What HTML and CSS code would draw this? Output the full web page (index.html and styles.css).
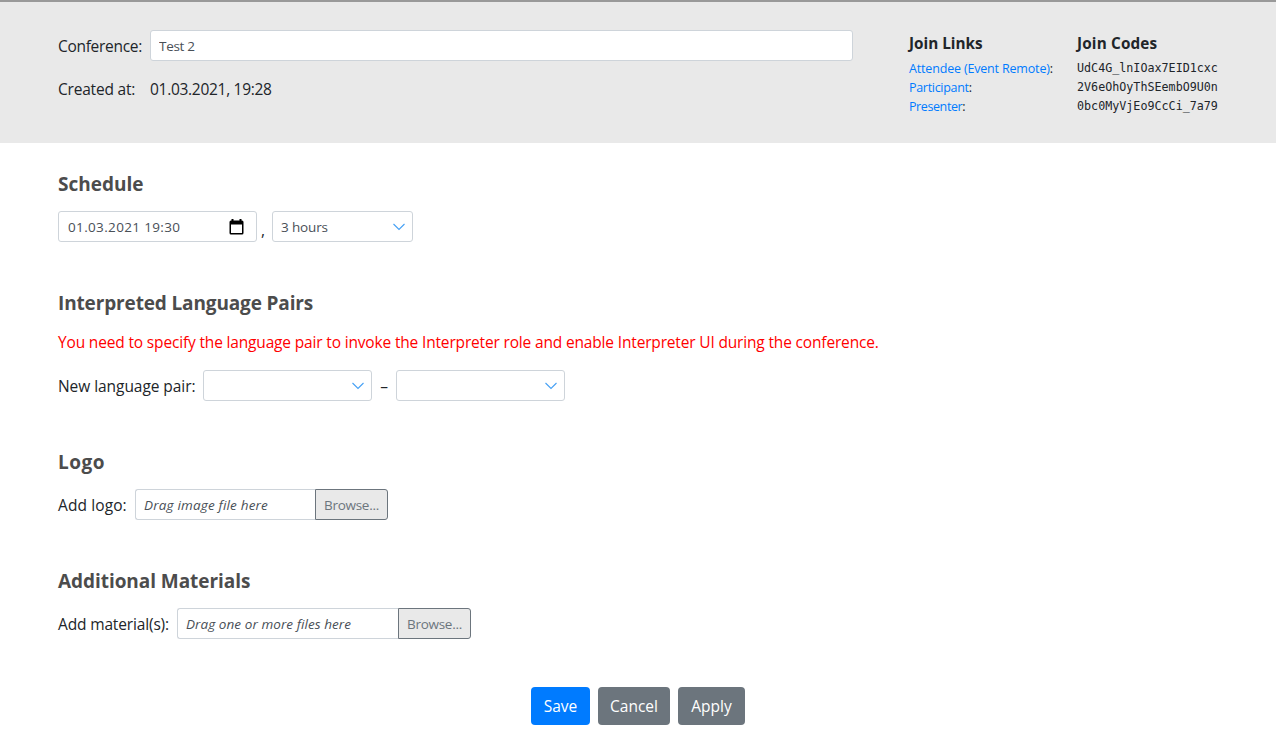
FILE: index.html
```html
<!DOCTYPE html>
<html lang="en">
<head>
<meta charset="utf-8">
<title>Conference</title>
<link rel="stylesheet" href="styles.css">
</head>
<body>
<header class="top">
  <div class="info">
    <label class="label conference" for="name">Conference:</label>
    <input class="control name" id="name" type="text" value="Test 2">
    <span class="label created">Created at:</span>
    <span class="date">01.03.2021, 19:28</span>
  </div>
  <div class="join">
    <strong class="join-title links-title">Join Links</strong>
    <strong class="join-title codes-title">Join Codes</strong>
    <span class="link-row attendee"><a class="link">Attendee (Event Remote)</a>:</span>
    <code class="code">UdC4G_lnIOax7EID1cxc</code>
    <span class="link-row participant"><a class="link">Participant</a>:</span>
    <code class="code">2V6eOhOyThSEembO9U0n</code>
    <span class="link-row presenter"><a class="link">Presenter</a>:</span>
    <code class="code">0bc0MyVjEo9CcCi_7a79</code>
  </div>
</header>
<main class="main">
  <section class="section">
    <h2 class="heading schedule">Schedule</h2>
    <div class="row">
      <div class="control datetime"><span class="datetime-text">01.03.2021 19:30</span>
        <svg class="calendar" width="15" height="16" viewBox="0 0 15 16"><path d="M2.5 0h2v1.5h6V0h2v1.5H13a1.5 1.5 0 0 1 1.5 1.500V14A1.500 1.500 0 0 1 13 15.500H2A1.500 1.500 0 0 1 .5 14V3A1.500 1.500 0 0 1 2 1.500h.5zM2 5.500V14h11V5.500z" fill="#000" fill-rule="evenodd"/></svg>
      </div>
      <span class="comma">,</span>
      <div class="control select hours"><span class="hours-text">3 hours</span><svg class="chevron" width="12" height="8" viewBox="0 0 12 8"><path d="M.5 1 6 6.500 11.500 1" fill="none" stroke="#45a0f5" stroke-width="1.100"/></svg></div>
    </div>
  </section>
  <section class="section">
    <h2 class="heading pairs">Interpreted Language Pairs</h2>
    <p class="warning">You need to specify the language pair to invoke the Interpreter role and enable Interpreter UI during the conference.</p>
    <div class="row">
      <span class="label new-pair">New language pair:</span>
      <div class="control select language"><svg class="chevron" width="12" height="8" viewBox="0 0 12 8"><path d="M.5 1 6 6.500 11.500 1" fill="none" stroke="#45a0f5" stroke-width="1.100"/></svg></div>
      <span class="dash">–</span>
      <div class="control select language"><svg class="chevron" width="12" height="8" viewBox="0 0 12 8"><path d="M.5 1 6 6.500 11.500 1" fill="none" stroke="#45a0f5" stroke-width="1.100"/></svg></div>
    </div>
  </section>
  <section class="section">
    <h2 class="heading logo">Logo</h2>
    <div class="row">
      <span class="label add-logo">Add logo:</span>
      <div class="control drop logo-drop"><span class="drop-text">Drag image file here</span></div>
      <button class="browse" type="button">Browse...</button>
    </div>
  </section>
  <section class="section">
    <h2 class="heading materials">Additional Materials</h2>
    <div class="row">
      <span class="label add-materials">Add material(s):</span>
      <div class="control drop material-drop"><span class="drop-text">Drag one or more files here</span></div>
      <button class="browse" type="button">Browse...</button>
    </div>
  </section>
</main>
<footer class="actions">
  <button class="button save" type="button">Save</button>
  <button class="button cancel" type="button">Cancel</button>
  <button class="button apply" type="button">Apply</button>
</footer>
</body>
</html>
```
FILE: styles.css
```css
* { box-sizing: border-box; }
body {
  margin: 0;
  background: #fff;
  color: #212529;
  font: 400 15.500px/24px "Open Sans", "Noto Sans", sans-serif;
  white-space: nowrap;
}
.top {
  display: flex;
  justify-content: space-between;
  height: 143px;
  padding: 28px 58px 0;
  border-top: 2px solid #999;
  background: #e9e9e9;
}
.info {
  display: grid;
  grid-template-columns: 92px 703px;
  grid-template-rows: 31px 24px;
  row-gap: 16px;
  align-content: start;
  align-items: center;
}
.control {
  display: flex;
  align-items: center;
  height: 31px;
  padding: 1px 8px 0;
  border: 1px solid #ced4da;
  border-radius: 3px;
  background: #fff;
  color: #495057;
  font: 400 13.500px/21px "Open Sans", "Noto Sans", sans-serif;
}
.conference { letter-spacing: -0.3px; }
.created { letter-spacing: -0.2px; }
.date { letter-spacing: -0.29px; }
.name { width: 703px; padding-top: 0; letter-spacing: -0.3px; }
.join {
  display: grid;
  grid-template-columns: 168px 141px;
  grid-template-rows: 29px 19px 19px 19px;
  align-content: start;
}
.join-title { font-size: 15.300px; line-height: 26px; }
.codes-title { letter-spacing: 0.15px; }
.link-row { font-size: 12.500px; line-height: 19px; letter-spacing: -0.17px; }
.participant { letter-spacing: -0.3px; }
.presenter { letter-spacing: -0.4px; }
.link { color: #007bff; }
.code { font: 11.710px/19px "DejaVu Sans Mono", monospace; }
.main { padding: 29px 58px 0; }
.section { margin-bottom: 49px; }
.section:last-child { margin-bottom: 48px; }
.heading {
  margin: 0 0 15px;
  color: #4c4c4c;
  font-size: 19px;
  font-weight: 700;
  line-height: 24px;
}
.pairs { letter-spacing: -0.14px; }
.logo { letter-spacing: 0.5px; }
.materials { letter-spacing: -0.06px; }
.row { display: flex; align-items: center; height: 31px; }
.datetime { width: 199px; justify-content: space-between; padding-right: 12px; }
.datetime-text { padding-left: 1px; letter-spacing: 0.35px; }
.comma { width: 15px; padding: 6px 0 0 4px; }
.select { justify-content: space-between; padding-right: 7px; }
.chevron { margin-left: auto; }
.hours { width: 141px; }
.hours-text { letter-spacing: -0.15px; }
.warning { margin: 0 0 16px; color: #f00; letter-spacing: -0.165px; }
.new-pair { width: 145px; letter-spacing: -0.06px; }
.language { width: 169px; }
.dash { width: 24px; text-align: center; }
.add-logo { width: 77px; letter-spacing: 0.1px; }
.add-materials { width: 119px; letter-spacing: -0.15px; }
.drop { border-right: 0; border-radius: 3px 0 0 3px; font-style: italic; }
.drop-text { letter-spacing: 0.12px; }
.logo-drop { width: 180px; }
.logo-drop .drop-text { letter-spacing: 0.18px; }
.material-drop { width: 221px; }
.material-drop .drop-text { letter-spacing: 0.07px; }
.browse {
  width: 73px;
  height: 31px;
  padding: 1px 0 0;
  border: 1px solid #6c757d;
  border-radius: 0 3px 3px 0;
  background: #e9e9e9;
  color: #6c757d;
  font: 400 13.500px/21px "Open Sans", "Noto Sans", sans-serif;
  letter-spacing: -0.3px;
}
.actions { display: flex; justify-content: center; gap: 8px; }
.button {
  height: 38px;
  padding: 0;
  border: 0;
  border-radius: 4px;
  background: #6c757d;
  color: #fff;
  font: 400 15.500px/24px "Open Sans", "Noto Sans", sans-serif;
}
.save { width: 59px; background: #007bff; }
.cancel { width: 72px; }
.apply { width: 67px; }
```
